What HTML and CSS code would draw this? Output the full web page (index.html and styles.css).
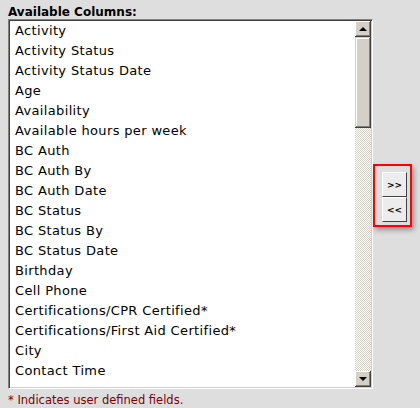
FILE: index.html
```html
<!DOCTYPE html>
<html lang="en">
<head>
    <meta charset="UTF-8">
    <title>Available Columns</title>
    <link rel="stylesheet" href="styles.css">
</head>
<body>

    <!-- Column chooser -->
    <div class="chooser">
        <div class="field-label">Available Columns:</div>

        <div class="picker">
            <div class="listbox">
                <ul class="options">
                    <li>Activity</li>
                    <li>Activity Status</li>
                    <li>Activity Status Date</li>
                    <li>Age</li>
                    <li>Availability</li>
                    <li>Available hours per week</li>
                    <li>BC Auth</li>
                    <li>BC Auth By</li>
                    <li>BC Auth Date</li>
                    <li>BC Status</li>
                    <li>BC Status By</li>
                    <li>BC Status Date</li>
                    <li>Birthday</li>
                    <li>Cell Phone</li>
                    <li>Certifications/CPR Certified*</li>
                    <li>Certifications/First Aid Certified*</li>
                    <li>City</li>
                    <li>Contact Time</li>
                </ul>

                <!-- Scrollbar -->
                <div class="scrollbar">
                    <div class="scroll-btn"><span class="arrow-up"></span></div>
                    <div class="scroll-thumb"></div>
                    <div class="scroll-track"></div>
                    <div class="scroll-btn"><span class="arrow-down"></span></div>
                </div>
            </div>

            <!-- Add / remove buttons -->
            <div class="mover">
                <button class="move-btn">&gt;&gt;</button>
                <button class="move-btn">&lt;&lt;</button>
            </div>
        </div>

        <p class="note">* Indicates user defined fields.</p>
    </div>

</body>
</html>
```

FILE: styles.css
```css
/* Reset */
* {
    margin: 0;
    padding: 0;
    box-sizing: border-box;
}

body {
    background: #dedede;
    font-family: 'DejaVu Sans', Verdana, sans-serif;
    font-size: 12px;
    color: #000;
}

.chooser {
    padding: 5px 8px 0 8px;
}

/* Label */
.field-label {
    font-weight: bold;
    font-size: 12px;
    line-height: 14px;
}

.picker {
    display: flex;
    align-items: flex-start;
}

/* Listbox */
.listbox {
    width: 365px;
    height: 370px;
    display: flex;
    background: #fff;
    border: 1px solid;
    border-color: #808080 #fff #fff #808080;
    box-shadow: inset 1px 1px #404040, inset -1px -1px #d4d0c8;
    padding: 1px;
    overflow: hidden;
}

.options {
    list-style: none;
    flex: 1;
    overflow: hidden;
}

.options li {
    font-size: 13px;
    letter-spacing: 0.35px;
    line-height: 20px;
    padding-left: 5px;
    white-space: nowrap;
}

/* Scrollbar */
.scrollbar {
    width: 16px;
    display: flex;
    flex-direction: column;
}

.scroll-btn,
.scroll-thumb {
    background: #d4d0c8;
    box-shadow: inset -1px -1px #404040, inset 1px 1px #fff, inset -2px -2px #808080;
}

.scroll-btn {
    height: 16px;
    display: flex;
    align-items: center;
    justify-content: center;
}

.scroll-thumb {
    height: 91px;
    box-shadow: inset -1px -1px #404040, inset 1px 1px #d4d0c8, inset -2px -2px #808080, inset 2px 2px #fff;
}

.scroll-track {
    flex: 1;
    background: repeating-conic-gradient(#d4d0c8 0 25%, #fff 0 50%) 0 0 / 2px 2px;
}

.arrow-up,
.arrow-down {
    width: 0;
    height: 0;
    border-left: 4px solid transparent;
    border-right: 4px solid transparent;
}

.arrow-up {
    border-bottom: 4px solid #000;
    margin-top: -1px;
}

.arrow-down {
    border-top: 4px solid #000;
}

/* Move buttons */
.mover {
    margin-top: 145px;
    display: flex;
    flex-direction: column;
    border: 2px solid #f00;
    padding: 6px 3px 3px 7px;
    box-shadow: 2px 3px 5px rgba(0, 0, 0, 0.35);
}

.move-btn {
    width: 25px;
    height: 25px;
    background: #ececec;
    border: 1px solid;
    border-color: #fff #404040 #404040 #fff;
    font-family: 'DejaVu Sans', sans-serif;
    font-size: 9px;
    font-weight: bold;
    color: #000;
    letter-spacing: 0;
}

/* Footnote */
.note {
    color: #800000;
    font-size: 11.5px;
    line-height: 16px;
    margin-top: 3px;
}
```
